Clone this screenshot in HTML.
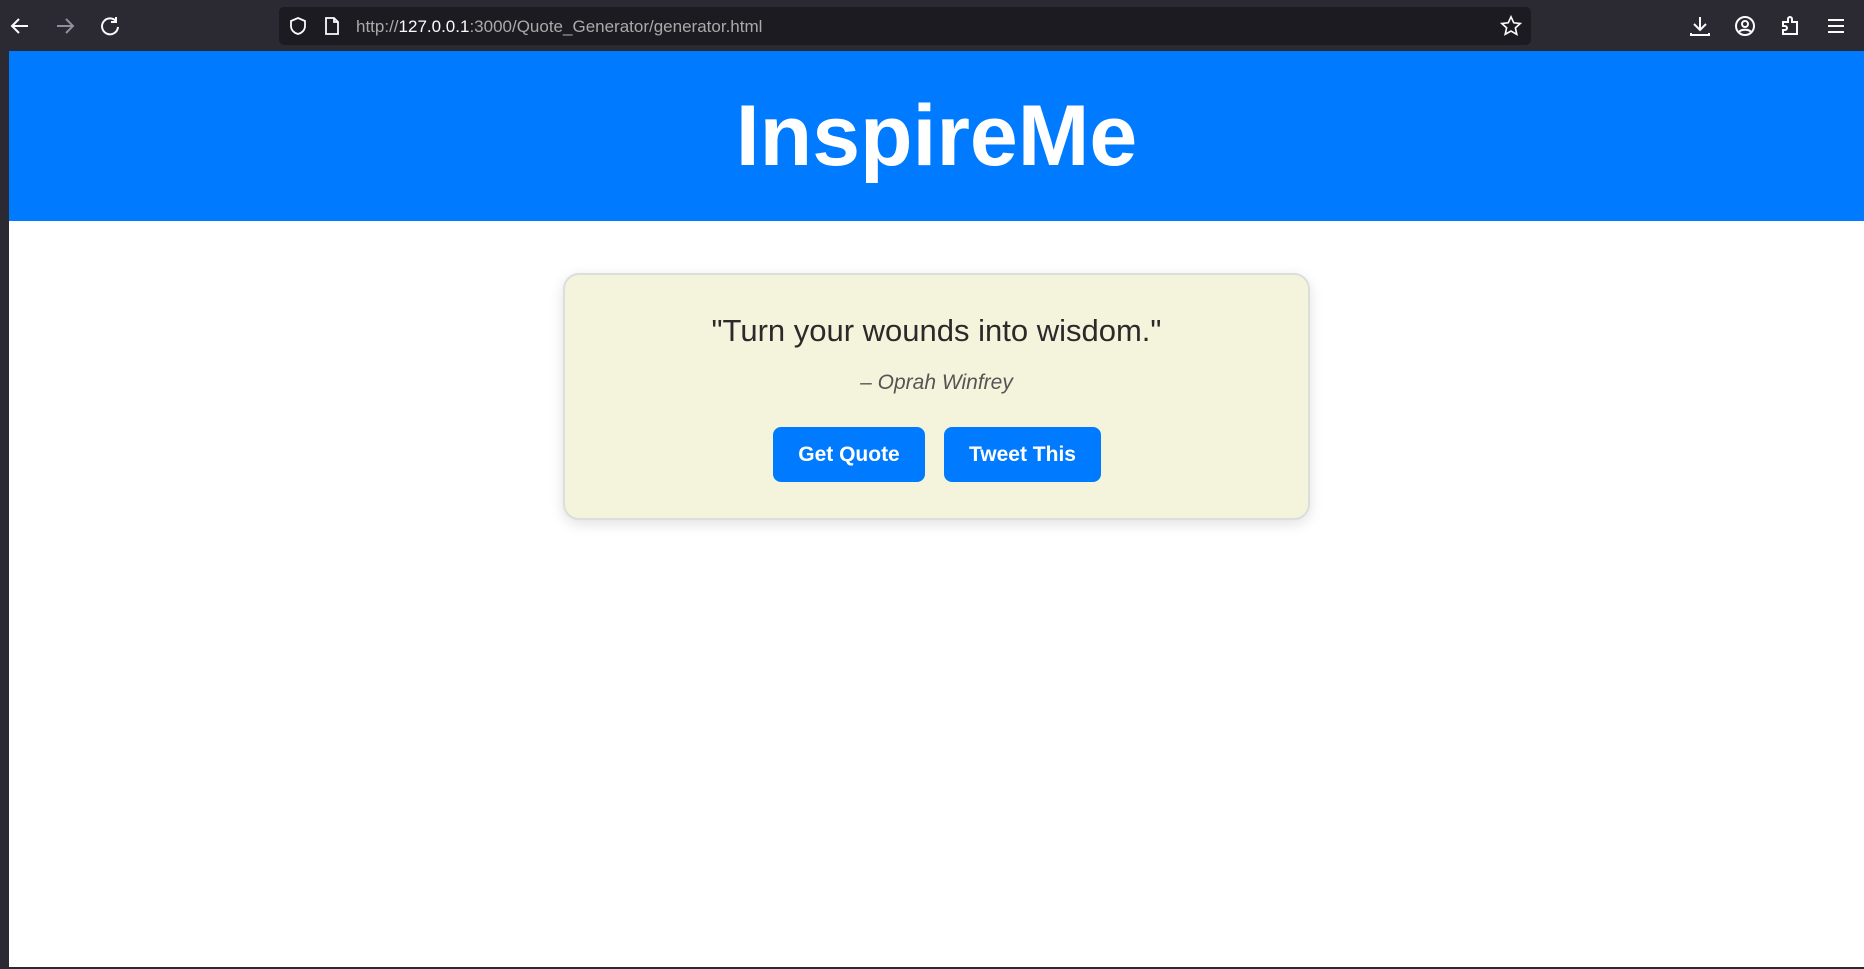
<!DOCTYPE html>
<html><head><meta charset="utf-8"><style>
*{margin:0;padding:0;box-sizing:border-box}
body{width:1864px;height:969px;background:#2b2a33;font-family:"Liberation Sans",sans-serif;position:relative;overflow:hidden}
.bar{position:absolute;left:0;top:0;width:1864px;height:51px;background:#2b2a33}
.url{position:absolute;left:279px;top:7px;width:1252px;height:38px;background:#1c1b22;border-radius:5px}
.url span{position:absolute;left:77px;top:10px;font-size:17px;color:#aaa}
.url b{font-weight:normal;color:#fbfbfe}
.page{position:absolute;left:9px;top:51px;width:1855px;height:916px;background:#fff}
.head{height:170px;background:#007bff;text-align:center;color:#fff;font-weight:bold;font-size:86px;line-height:170px;letter-spacing:0}
.card{position:absolute;left:554px;top:222px;width:747px;height:247px;background:#f4f4dc;border:2px solid #ddd;border-radius:16px;box-shadow:0 4px 14px rgba(0,0,0,.12);text-align:center}
.q{position:absolute;top:38px;width:100%;font-size:31px;color:#2a2a2a}
.a{position:absolute;top:96px;width:100%;font-size:21px;font-style:italic;color:#555}
.btn{position:absolute;top:152px;height:55px;background:#007bff;color:#fff;font-weight:bold;font-size:21px;border-radius:8px;line-height:55px;text-align:center}
svg{position:absolute}
</style></head><body>
<div class="bar">
<svg style="left:8px;top:14px" width="24" height="24" viewBox="0 0 24 24" fill="none" stroke="#fbfbfe" stroke-width="2"><path d="M20 12H5M11 5l-7 7 7 7"/></svg>
<svg style="left:53px;top:14px" width="24" height="24" viewBox="0 0 24 24" fill="none" stroke="#8f8f9d" stroke-width="2"><path d="M4 12h15M13 5l7 7-7 7"/></svg>
<svg style="left:98px;top:14px" width="24" height="24" viewBox="0 0 24 24" fill="none" stroke="#fbfbfe" stroke-width="2"><path d="M18 7A8 8 0 1 0 20 13M18 3v5h-5"/></svg>
<div class="url">
<svg style="left:9px;top:9px" width="20" height="20" viewBox="0 0 20 20" fill="none" stroke="#fbfbfe" stroke-width="1.8"><path d="M10 2l7 3v5c0 4-3 7-7 8-4-1-7-4-7-8V5z"/></svg>
<svg style="left:44px;top:9px" width="18" height="20" viewBox="0 0 18 20" fill="none" stroke="#fbfbfe" stroke-width="1.8"><path d="M3 2h8l4 4v12H3zM11 2v4h4"/></svg>
<span>http://<b>127.0.0.1</b>:3000/Quote_Generator/generator.html</span>
<svg style="left:1221px;top:8px" width="22" height="22" viewBox="0 0 24 24" fill="none" stroke="#fbfbfe" stroke-width="1.8"><path d="M12 2l3 6.5 7 .8-5.2 4.8 1.5 7L12 17.5 5.7 21l1.5-7L2 9.3l7-.8z"/></svg>
</div>
<svg style="left:1688px;top:14px" width="24" height="24" viewBox="0 0 24 24" fill="none" stroke="#fbfbfe" stroke-width="2"><path d="M12 3v13M6 10l6 6 6-6M3 19v2h18v-2"/></svg>
<svg style="left:1733px;top:14px" width="24" height="24" viewBox="0 0 24 24" fill="none" stroke="#fbfbfe" stroke-width="2"><circle cx="12" cy="12" r="9"/><circle cx="12" cy="10" r="3"/><path d="M6 18c2-3 10-3 12 0"/></svg>
<svg style="left:1779px;top:14px" width="24" height="24" viewBox="0 0 24 24" fill="none" stroke="#fbfbfe" stroke-width="2"><path d="M4 8h5V5a2 2 0 0 1 4 0v3h5v12H4v-4h2a2 2 0 0 0 0-4H4z"/></svg>
<svg style="left:1824px;top:14px" width="24" height="24" viewBox="0 0 24 24" fill="none" stroke="#fbfbfe" stroke-width="2"><path d="M4 6h16M4 12h16M4 18h16"/></svg>
</div>
<div class="page">
<div class="head">InspireMe</div>
<div class="card">
<div class="q">"Turn your wounds into wisdom."</div>
<div class="a">– Oprah Winfrey</div>
<div class="btn" style="left:208px;width:152px">Get Quote</div>
<div class="btn" style="left:379px;width:157px">Tweet This</div>
</div>
</div>
</body></html>
